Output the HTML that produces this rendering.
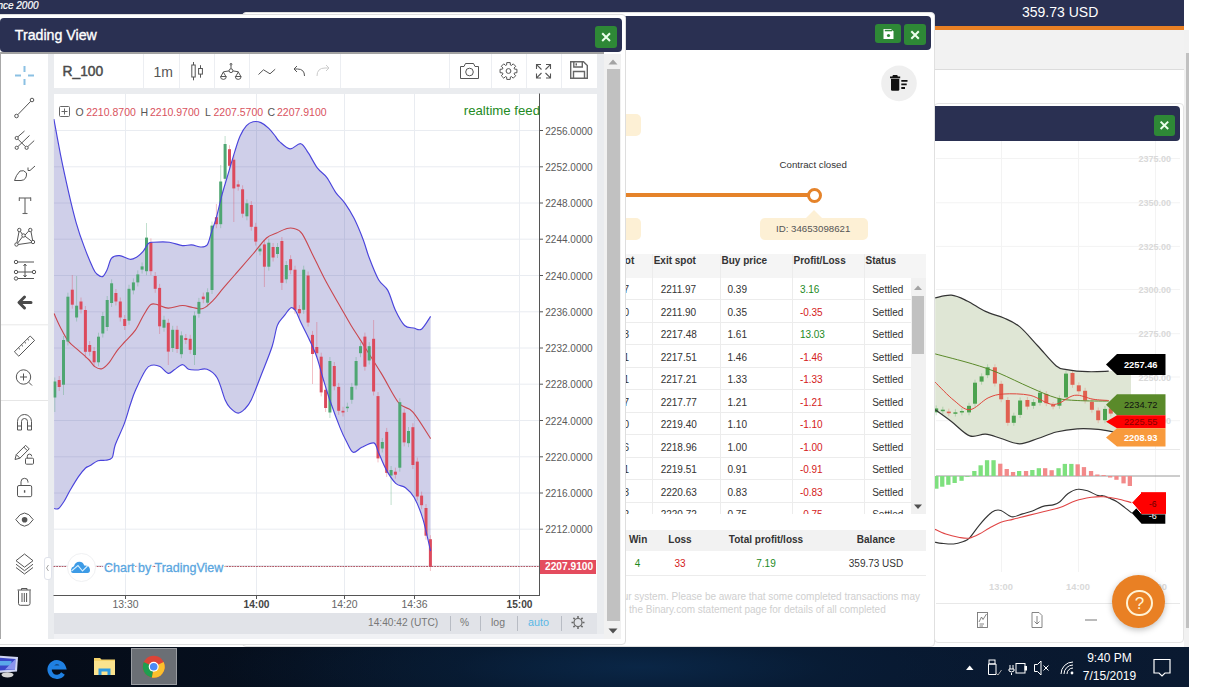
<!DOCTYPE html>
<html><head><meta charset="utf-8">
<style>
*{margin:0;padding:0;box-sizing:border-box}
html,body{width:1219px;height:687px;overflow:hidden;background:#fff;font-family:"Liberation Sans",sans-serif}
.a{position:absolute}
.navy{background:#2a3052}
.btn{position:absolute;background:#2e8836;border-radius:3px}
.t{position:absolute;white-space:nowrap;line-height:1}
svg{position:absolute;left:0;top:0;overflow:visible}
</style></head><body>

<div class="a navy" style="left:0;top:0;width:1184px;height:26px"></div>
<div class="a" style="left:0;top:26px;width:1184px;height:4px;background:#e98024"></div>
<div class="a" style="left:0;top:30px;width:1189px;height:39.5px;background:#f2f2f2;border-bottom:1px solid #dcdcdc"></div>
<div class="t" style="left:1022px;top:5px;font-size:14px;color:#fff">359.73 USD</div>
<div class="t" style="left:-2.6px;top:0.8px;font-size:10px;color:#fff;font-style:italic;-webkit-text-stroke:0.2px #fff">nce 2000</div>
<div class="a" style="left:1184px;top:30px;width:5px;height:617px;background:#f1f1f1"></div>
<div class="a" style="left:1185.5px;top:53px;width:3.5px;height:575px;background:#c1c1c1"></div>
<div class="a" style="left:934px;top:103px;width:250px;height:540px;background:#fff;border:1px solid #e4e4e4;border-radius:4px"></div>
<div class="a navy" style="left:900px;top:106px;width:280px;height:34.5px;border-radius:4px"></div>
<div class="btn" style="left:1154px;top:115px;width:21px;height:21px"></div>
<svg width="1219" height="687"><defs><clipPath id="c3"><rect x="935" y="141" width="245" height="500"/></clipPath></defs><g clip-path="url(#c3)"><g stroke="#f3f3f3" stroke-width="1"><line x1="936" y1="158.5" x2="1180" y2="158.5"/><line x1="936" y1="202.8" x2="1180" y2="202.8"/><line x1="936" y1="246.4" x2="1180" y2="246.4"/><line x1="936" y1="289.5" x2="1180" y2="289.5"/><line x1="936" y1="333.7" x2="1180" y2="333.7"/><line x1="936" y1="377.0" x2="1180" y2="377.0"/><line x1="936" y1="420.7" x2="1180" y2="420.7"/><line x1="1001.5" y1="141" x2="1001.5" y2="572"/><line x1="1078.5" y1="141" x2="1078.5" y2="572"/><line x1="1155.5" y1="141" x2="1155.5" y2="572"/></g>
<text x="1171" y="162.0" text-anchor="end" font-size="9" fill="#d9d9d9" font-weight="bold" font-family="Liberation Sans">2375.00</text>
<text x="1171" y="206.3" text-anchor="end" font-size="9" fill="#d9d9d9" font-weight="bold" font-family="Liberation Sans">2350.00</text>
<text x="1171" y="249.9" text-anchor="end" font-size="9" fill="#d9d9d9" font-weight="bold" font-family="Liberation Sans">2325.00</text>
<text x="1171" y="293.0" text-anchor="end" font-size="9" fill="#d9d9d9" font-weight="bold" font-family="Liberation Sans">2300.00</text>
<text x="1171" y="337.2" text-anchor="end" font-size="9" fill="#d9d9d9" font-weight="bold" font-family="Liberation Sans">2275.00</text>
<text x="1171" y="380.5" text-anchor="end" font-size="9" fill="#d9d9d9" font-weight="bold" font-family="Liberation Sans">2250.00</text>
<text x="1171" y="424.2" text-anchor="end" font-size="9" fill="#d9d9d9" font-weight="bold" font-family="Liberation Sans">2225.00</text>
<path d="M935.2 297.8 C937.9 297.4 946.1 294.7 951.4 295.2 C956.8 295.7 961.5 298.3 967.2 301.0 C972.8 303.7 979.4 308.6 985.5 311.4 C991.6 314.3 998.2 315.5 1003.9 318.0 C1009.5 320.5 1013.9 322.0 1019.6 326.6 C1025.3 331.3 1031.8 339.5 1037.9 346.0 C1044.0 352.6 1051.5 362.0 1056.3 366.0 C1061.1 369.9 1061.5 368.7 1066.8 369.6 C1072.0 370.6 1080.7 371.5 1087.7 371.7 C1094.7 372.0 1105.2 371.3 1108.7 371.2 L1113.9 432.0 C1111.3 431.6 1104.3 429.9 1098.2 429.4 C1092.1 428.8 1084.2 428.4 1077.2 428.8 C1070.2 429.3 1062.8 430.4 1056.3 432.0 C1049.7 433.6 1044.0 436.6 1037.9 438.5 C1031.8 440.5 1025.7 443.8 1019.6 443.8 C1013.5 443.8 1006.9 440.2 1001.2 438.5 C995.6 436.9 990.8 434.5 985.5 434.1 C980.3 433.7 975.5 438.0 969.8 435.9 C964.1 433.8 957.2 425.9 951.4 421.5 C945.7 417.1 937.9 411.7 935.2 409.7 Z" fill="#dfe6d5"/>
<rect x="1108" y="371" width="23" height="60" fill="#dfe6d5"/>
<line x1="936.2" y1="405.4" x2="936.2" y2="415.3" stroke="#4ca24f" stroke-opacity="0.3"/>
<rect x="934.2" y="408.4" width="4" height="3.9" fill="#4ca24f"/>
<line x1="942.8" y1="406.7" x2="942.8" y2="414.0" stroke="#4ca24f" stroke-opacity="0.3"/>
<rect x="940.8" y="409.7" width="4" height="1.5" fill="#4ca24f"/>
<line x1="948.8" y1="408.6" x2="948.8" y2="416.1" stroke="#e06050" stroke-opacity="0.3"/>
<rect x="946.8" y="411.6" width="4" height="1.6" fill="#e06050"/>
<line x1="955.4" y1="409.3" x2="955.4" y2="416.6" stroke="#4ca24f" stroke-opacity="0.3"/>
<rect x="953.4" y="412.3" width="4" height="1.5" fill="#4ca24f"/>
<line x1="961.9" y1="408.0" x2="961.9" y2="415.3" stroke="#4ca24f" stroke-opacity="0.3"/>
<rect x="959.9" y="411.0" width="4" height="1.5" fill="#4ca24f"/>
<line x1="969.0" y1="402.8" x2="969.0" y2="415.3" stroke="#4ca24f" stroke-opacity="0.3"/>
<rect x="967.0" y="405.8" width="4" height="6.6" fill="#4ca24f"/>
<line x1="975.0" y1="379.7" x2="975.0" y2="406.7" stroke="#4ca24f" stroke-opacity="0.3"/>
<rect x="973.0" y="382.7" width="4" height="21.0" fill="#4ca24f"/>
<line x1="981.6" y1="373.4" x2="981.6" y2="384.7" stroke="#4ca24f" stroke-opacity="0.3"/>
<rect x="979.6" y="376.4" width="4" height="5.2" fill="#4ca24f"/>
<line x1="987.6" y1="364.3" x2="987.6" y2="378.1" stroke="#4ca24f" stroke-opacity="0.3"/>
<rect x="985.6" y="367.3" width="4" height="7.9" fill="#4ca24f"/>
<line x1="994.9" y1="364.3" x2="994.9" y2="386.5" stroke="#e06050" stroke-opacity="0.3"/>
<rect x="992.9" y="367.3" width="4" height="16.2" fill="#e06050"/>
<line x1="1001.2" y1="380.8" x2="1001.2" y2="402.2" stroke="#e06050" stroke-opacity="0.3"/>
<rect x="999.2" y="383.8" width="4" height="15.5" fill="#e06050"/>
<line x1="1007.8" y1="397.0" x2="1007.8" y2="425.8" stroke="#e06050" stroke-opacity="0.3"/>
<rect x="1005.8" y="400.0" width="4" height="22.8" fill="#e06050"/>
<line x1="1013.8" y1="412.7" x2="1013.8" y2="425.8" stroke="#4ca24f" stroke-opacity="0.3"/>
<rect x="1011.8" y="415.7" width="4" height="7.1" fill="#4ca24f"/>
<line x1="1020.1" y1="397.5" x2="1020.1" y2="418.0" stroke="#4ca24f" stroke-opacity="0.3"/>
<rect x="1018.1" y="400.5" width="4" height="14.4" fill="#4ca24f"/>
<line x1="1027.4" y1="397.0" x2="1027.4" y2="409.6" stroke="#e06050" stroke-opacity="0.3"/>
<rect x="1025.4" y="400.0" width="4" height="6.6" fill="#e06050"/>
<line x1="1033.5" y1="399.1" x2="1033.5" y2="408.8" stroke="#4ca24f" stroke-opacity="0.3"/>
<rect x="1031.5" y="402.1" width="4" height="3.7" fill="#4ca24f"/>
<line x1="1040.0" y1="389.7" x2="1040.0" y2="405.6" stroke="#4ca24f" stroke-opacity="0.3"/>
<rect x="1038.0" y="392.7" width="4" height="10.0" fill="#4ca24f"/>
<line x1="1046.3" y1="391.0" x2="1046.3" y2="406.2" stroke="#e06050" stroke-opacity="0.3"/>
<rect x="1044.3" y="394.0" width="4" height="9.2" fill="#e06050"/>
<line x1="1053.1" y1="402.0" x2="1053.1" y2="409.3" stroke="#e06050" stroke-opacity="0.3"/>
<rect x="1051.1" y="405.0" width="4" height="1.5" fill="#e06050"/>
<line x1="1059.4" y1="395.4" x2="1059.4" y2="408.8" stroke="#4ca24f" stroke-opacity="0.3"/>
<rect x="1057.4" y="398.4" width="4" height="7.3" fill="#4ca24f"/>
<line x1="1066.0" y1="370.6" x2="1066.0" y2="400.4" stroke="#4ca24f" stroke-opacity="0.3"/>
<rect x="1064.0" y="373.6" width="4" height="23.8" fill="#4ca24f"/>
<line x1="1072.5" y1="370.0" x2="1072.5" y2="387.8" stroke="#e06050" stroke-opacity="0.3"/>
<rect x="1070.5" y="373.0" width="4" height="11.8" fill="#e06050"/>
<line x1="1078.8" y1="382.3" x2="1078.8" y2="394.4" stroke="#e06050" stroke-opacity="0.3"/>
<rect x="1076.8" y="385.3" width="4" height="6.0" fill="#e06050"/>
<line x1="1085.1" y1="387.8" x2="1085.1" y2="403.5" stroke="#e06050" stroke-opacity="0.3"/>
<rect x="1083.1" y="390.8" width="4" height="9.7" fill="#e06050"/>
<line x1="1091.9" y1="398.9" x2="1091.9" y2="412.7" stroke="#e06050" stroke-opacity="0.3"/>
<rect x="1089.9" y="401.9" width="4" height="7.9" fill="#e06050"/>
<line x1="1098.2" y1="407.5" x2="1098.2" y2="423.2" stroke="#e06050" stroke-opacity="0.3"/>
<rect x="1096.2" y="410.5" width="4" height="9.7" fill="#e06050"/>
<line x1="1105.0" y1="405.9" x2="1105.0" y2="423.2" stroke="#4ca24f" stroke-opacity="0.3"/>
<rect x="1103.0" y="408.9" width="4" height="11.3" fill="#4ca24f"/>
<line x1="1110.8" y1="405.4" x2="1110.8" y2="416.6" stroke="#e06050" stroke-opacity="0.3"/>
<rect x="1108.8" y="408.4" width="4" height="5.2" fill="#e06050"/>
<path d="M935.2 353.9 C941.4 355.6 961.8 360.7 972.4 363.9 C983.0 367.0 989.0 369.1 998.6 373.0 C1008.2 377.0 1020.5 383.3 1030.1 387.4 C1039.7 391.6 1048.4 395.7 1056.3 397.9 C1064.1 400.1 1068.5 400.0 1077.2 400.5 C1086.0 401.1 1103.4 401.0 1108.7 401.1" fill="none" stroke="#5b8a2a" stroke-width="1"/>
<path d="M935.2 382.2 C938.3 385.3 948.3 396.0 954.1 400.5 C959.8 405.1 964.1 410.2 969.8 409.7 C975.5 409.3 982.5 400.5 988.1 397.9 C993.8 395.3 996.9 394.4 1003.9 394.0 C1010.8 393.6 1021.8 393.6 1030.1 395.3 C1038.4 397.1 1046.2 404.5 1053.6 404.5 C1061.1 404.5 1068.1 396.2 1074.6 395.3 C1081.2 394.4 1087.3 398.4 1093.0 399.2 C1098.6 400.1 1106.1 400.3 1108.7 400.5" fill="none" stroke="#e0453a" stroke-width="1"/>
<path d="M935.2 297.8 C937.9 297.4 946.1 294.7 951.4 295.2 C956.8 295.7 961.5 298.3 967.2 301.0 C972.8 303.7 979.4 308.6 985.5 311.4 C991.6 314.3 998.2 315.5 1003.9 318.0 C1009.5 320.5 1013.9 322.0 1019.6 326.6 C1025.3 331.3 1031.8 339.5 1037.9 346.0 C1044.0 352.6 1051.5 362.0 1056.3 366.0 C1061.1 369.9 1061.5 368.7 1066.8 369.6 C1072.0 370.6 1080.7 371.5 1087.7 371.7 C1094.7 372.0 1105.2 371.3 1108.7 371.2" fill="none" stroke="#333" stroke-width="1.2"/>
<path d="M935.2 409.7 C937.9 411.7 945.7 417.1 951.4 421.5 C957.2 425.9 964.1 433.8 969.8 435.9 C975.5 438.0 980.3 433.7 985.5 434.1 C990.8 434.5 995.6 436.9 1001.2 438.5 C1006.9 440.2 1013.5 443.8 1019.6 443.8 C1025.7 443.8 1031.8 440.5 1037.9 438.5 C1044.0 436.6 1049.7 433.6 1056.3 432.0 C1062.8 430.4 1070.2 429.3 1077.2 428.8 C1084.2 428.4 1092.1 428.8 1098.2 429.4 C1104.3 429.9 1111.3 431.6 1113.9 432.0" fill="none" stroke="#333" stroke-width="1.2"/>
<path d="M1106 364.5 L1117 354.0 L1165.5 354.0 L1165.5 375.0 L1117 375.0 Z" fill="#000"/>
<text x="1157.5" y="367.8" text-anchor="end" font-size="9.3" fill="#fff" font-family="Liberation Sans" font-weight="bold">2257.46</text>
<path d="M1106 404.7 L1117 394.2 L1165.5 394.2 L1165.5 415.2 L1117 415.2 Z" fill="#5a8a2a"/>
<text x="1157.5" y="408.0" text-anchor="end" font-size="9.3" fill="#111" font-family="Liberation Sans">2234.72</text>
<path d="M1106 421.8 L1117 415.2 L1165.5 415.2 L1165.5 428.3 L1117 428.3 Z" fill="#ff0000"/>
<text x="1157.5" y="425.1" text-anchor="end" font-size="9.3" fill="#800" font-family="Liberation Sans">2225.55</text>
<path d="M1106 437.5 L1117 428.3 L1165.5 428.3 L1165.5 446.6 L1117 446.6 Z" fill="#f89a3c"/>
<text x="1157.5" y="440.8" text-anchor="end" font-size="9.3" fill="#fff" font-family="Liberation Sans" font-weight="bold">2208.93</text>
<line x1="936" y1="449.5" x2="1180" y2="449.5" stroke="#e8e8e8"/>
<line x1="936" y1="476" x2="1180" y2="476" stroke="#9a9a9a"/>
<rect x="934.2" y="476.0" width="4.3" height="12.7" fill="#7ee07e"/>
<rect x="940.1" y="476.0" width="4.3" height="10.7" fill="#7ee07e"/>
<rect x="946.2" y="476.0" width="4.3" height="8.8" fill="#7ee07e"/>
<rect x="952.5" y="476.0" width="4.3" height="7.0" fill="#7ee07e"/>
<rect x="959.4" y="476.0" width="4.3" height="4.8" fill="#7ee07e"/>
<rect x="965.3" y="476.0" width="4.3" height="0.8" fill="#7ee07e"/>
<rect x="972.2" y="471.0" width="4.3" height="5.0" fill="#7ee07e"/>
<rect x="978.5" y="465.3" width="4.3" height="10.7" fill="#7ee07e"/>
<rect x="984.9" y="460.2" width="4.3" height="15.8" fill="#7ee07e"/>
<rect x="991.4" y="460.2" width="4.3" height="15.8" fill="#7ee07e"/>
<rect x="998.1" y="463.7" width="4.3" height="12.3" fill="#f28a8a"/>
<rect x="1004.6" y="469.0" width="4.3" height="7.0" fill="#f28a8a"/>
<rect x="1010.9" y="472.0" width="4.3" height="4.0" fill="#f28a8a"/>
<rect x="1017.0" y="471.0" width="4.3" height="5.0" fill="#7ee07e"/>
<rect x="1023.9" y="471.0" width="4.3" height="5.0" fill="#f28a8a"/>
<rect x="1030.2" y="470.0" width="4.3" height="6.0" fill="#7ee07e"/>
<rect x="1036.7" y="468.2" width="4.3" height="7.8" fill="#7ee07e"/>
<rect x="1043.0" y="468.2" width="4.3" height="7.8" fill="#f28a8a"/>
<rect x="1049.5" y="470.2" width="4.3" height="5.8" fill="#f28a8a"/>
<rect x="1056.4" y="468.2" width="4.3" height="7.8" fill="#7ee07e"/>
<rect x="1062.7" y="463.9" width="4.3" height="12.1" fill="#7ee07e"/>
<rect x="1069.2" y="463.9" width="4.3" height="12.1" fill="#7ee07e"/>
<rect x="1075.5" y="464.3" width="4.3" height="11.7" fill="#f28a8a"/>
<rect x="1081.8" y="467.1" width="4.3" height="8.9" fill="#f28a8a"/>
<rect x="1088.9" y="471.0" width="4.3" height="5.0" fill="#f28a8a"/>
<rect x="1095.2" y="474.5" width="4.3" height="1.5" fill="#f28a8a"/>
<rect x="1101.5" y="475.1" width="4.3" height="0.9" fill="#f28a8a"/>
<rect x="1108.0" y="476.0" width="4.3" height="1.5" fill="#f28a8a"/>
<rect x="1114.3" y="476.0" width="4.3" height="3.8" fill="#f28a8a"/>
<rect x="1121.4" y="476.0" width="4.3" height="7.4" fill="#f28a8a"/>
<rect x="1127.7" y="476.0" width="4.3" height="10.0" fill="#f28a8a"/>
<path d="M933.9 542.0 C935.3 542.2 938.5 543.1 941.8 543.4 C945.1 543.7 950.0 544.3 953.6 544.0 C957.2 543.7 960.8 542.4 963.5 541.4 C966.1 540.4 966.8 540.8 969.4 538.1 C972.0 535.4 975.9 529.2 979.2 525.3 C982.5 521.3 986.4 516.9 989.1 514.5 C991.7 512.0 993.0 511.2 995.0 510.5 C996.9 509.9 998.6 509.7 1000.9 510.5 C1003.2 511.3 1006.6 514.4 1008.8 515.4 C1010.9 516.5 1011.4 517.1 1013.7 516.8 C1016.0 516.6 1019.4 514.8 1022.5 513.9 C1025.7 512.9 1029.1 512.3 1032.4 511.1 C1035.7 509.9 1038.6 507.7 1042.2 506.6 C1045.8 505.5 1051.1 505.4 1054.0 504.6 C1057.0 503.8 1057.6 503.5 1059.9 501.7 C1062.2 499.9 1064.9 495.8 1067.8 493.8 C1070.8 491.7 1074.4 489.7 1077.7 489.3 C1080.9 488.8 1084.2 489.8 1087.5 490.8 C1090.8 491.8 1094.7 494.5 1097.4 495.4 C1100.0 496.2 1101.3 495.3 1103.3 495.8 C1105.2 496.2 1106.9 497.1 1109.2 498.1 C1111.5 499.1 1114.4 500.1 1117.0 501.7 C1119.7 503.2 1122.5 505.7 1124.9 507.6 C1127.4 509.5 1130.7 512.2 1131.8 513.1" fill="none" stroke="#333" stroke-width="1.1"/>
<path d="M933.9 528.8 C935.9 529.7 941.5 532.7 945.8 534.1 C950.0 535.6 955.6 536.8 959.5 537.5 C963.5 538.1 966.1 538.6 969.4 538.1 C972.7 537.5 975.9 535.8 979.2 534.1 C982.5 532.5 985.5 530.2 989.1 528.2 C992.7 526.3 996.9 523.8 1000.9 522.3 C1004.8 520.9 1008.1 520.5 1012.7 519.4 C1017.3 518.2 1023.2 516.8 1028.4 515.4 C1033.7 514.1 1038.9 512.8 1044.2 511.5 C1049.4 510.2 1054.7 509.4 1059.9 507.6 C1065.2 505.8 1070.4 502.4 1075.7 500.7 C1080.9 499.0 1086.9 498.0 1091.4 497.3 C1096.0 496.7 1099.0 496.5 1103.3 496.7 C1107.5 497.0 1112.3 497.7 1117.0 498.7 C1121.8 499.7 1129.4 502.0 1131.8 502.6" fill="none" stroke="#e04545" stroke-width="1.1"/>
<path d="M1131.8 513 L1141.6 503 L1165.3 503 L1165.3 523.7 L1141.6 523.7 Z" fill="#000"/>
<text x="1152.8" y="518.8" text-anchor="middle" font-size="9" fill="#fff" font-family="Liberation Sans">-6</text>
<path d="M1131.8 502.6 L1141.6 492.2 L1165.3 492.2 L1165.3 513.9 L1141.6 513.9 Z" fill="#ff0000" stroke="#fff" stroke-width="1"/>
<rect x="1141" y="492.2" width="25" height="21.7" fill="#ff0000"/>
<text x="1152.8" y="506.5" text-anchor="middle" font-size="8.5" fill="#600" font-family="Liberation Sans">-6</text>
<text x="1001" y="589.5" text-anchor="middle" font-size="9.3" fill="#d9d9d9" font-family="Liberation Sans" font-weight="bold">13:00</text>
<text x="1078" y="589.5" text-anchor="middle" font-size="9.3" fill="#d9d9d9" font-family="Liberation Sans" font-weight="bold">14:00</text>
<text x="1155" y="589.5" text-anchor="middle" font-size="9.3" fill="#d9d9d9" font-family="Liberation Sans" font-weight="bold">15:00</text>
<line x1="936" y1="603.5" x2="1180" y2="603.5" stroke="#e8e8e8"/>
<g fill="none" stroke="#777" stroke-width="0.9"><rect x="977.5" y="612.5" width="10" height="15"/><path d="M979 622 L981.5 617 L983 619.5 L986.5 614"/><path d="M979.5 624 L984 624 M979.5 626 L983 626"/>
<path d="M1032 612.5 L1039 612.5 L1042 615.5 L1042 627.5 L1032 627.5 Z M1037 616 L1037 624 M1034.5 621.5 L1037 624 L1039.5 621.5"/></g>
<line x1="1085" y1="620" x2="1097" y2="620" stroke="#bbb" stroke-width="2"/></g><path d="M1160.6 121.6 L1168.2 129 M1168.2 121.6 L1160.6 129" stroke="#eaffea" stroke-width="2"/></svg>
<div class="a" style="left:1112px;top:574.9px;width:53.4px;height:53.4px;border-radius:50%;background:#e98024;box-shadow:0 2px 6px rgba(0,0,0,0.25)"></div>
<div class="a" style="left:1126.4px;top:589.6px;width:26.2px;height:26.2px;border-radius:50%;border:2px solid #fff3d6"></div>
<div class="t" style="top:594.61px;font-size:17.00px;color:#fff3d6;left:1139.50px;transform:translateX(-50%)">?</div>
<div class="a" style="left:242px;top:12px;width:693px;height:635px;background:#fff;border:1px solid #e0e0e0;border-radius:4px"></div>
<div class="a navy" style="left:246px;top:16px;width:685px;height:34px;border-radius:4px"></div>
<div class="btn" style="left:875px;top:24px;width:26px;height:19px"></div>
<div class="btn" style="left:904px;top:24px;width:22px;height:21px"></div>
<svg width="1219" height="687"><path d="M883.5 29 L891 29 L893.5 31.5 L893.5 39 L883.5 39 Z" fill="#fff"/><rect x="884.8" y="29.8" width="7.3" height="1.5" fill="#2e8836"/><circle cx="888.5" cy="35.5" r="1.6" fill="#2e8836"/><path d="M911.3 31.3 L918.8 38.8 M918.8 31.3 L911.3 38.8" stroke="#eaffea" stroke-width="2"/><circle cx="899" cy="83.4" r="17.8" fill="#efefef"/><path d="M890 77.4 L900.2 77.4 M893 77 L893.5 75.8 L896.7 75.8 L897.2 77" fill="none" stroke="#111" stroke-width="1.6"/><path d="M891 78.8 L899.3 78.8 L899.3 89.5 Q899.3 90.7 898 90.7 L892.3 90.7 Q891 90.7 891 89.5 Z" fill="#111"/><path d="M901.3 80.8 L907.5 80.8 M901.3 84.4 L906.7 84.4 M901.3 88 L905 88" stroke="#111" stroke-width="1.8"/></svg>
<div class="a" style="left:600px;top:114px;width:41px;height:22px;background:#fdf0d5;border-radius:5px"></div>
<div class="a" style="left:600px;top:217.5px;width:41px;height:22px;background:#fdf0d5;border-radius:5px"></div>
<div class="a" style="left:600px;top:193px;width:210px;height:4px;background:#e5832a"></div>
<div class="a" style="left:806.5px;top:187.5px;width:15px;height:15px;border-radius:50%;background:#fff;border:3.5px solid #e5832a"></div>
<div class="t" style="left:779.5px;top:160px;font-size:9.7px;color:#333">Contract closed</div>
<div class="a" style="left:760px;top:217.5px;width:108px;height:22px;background:#fdf0d5;border-radius:5px"></div>
<svg width="1219" height="687"><path d="M806 218 L814 210 L822 218 Z" fill="#fdf0d5"/></svg>
<div class="t" style="left:776px;top:224px;font-size:9.7px;color:#555">ID: 34653098621</div>
<div class="a" style="left:590px;top:254px;width:335.5px;height:23.5px;background:#f5f5f5"></div>
<div class="a" style="left:652px;top:254px;width:1px;height:260px;background:#ececec"></div>
<div class="a" style="left:720px;top:254px;width:1px;height:260px;background:#ececec"></div>
<div class="a" style="left:792px;top:254px;width:1px;height:260px;background:#ececec"></div>
<div class="a" style="left:864px;top:254px;width:1px;height:260px;background:#ececec"></div>
<div class="a" style="left:590px;top:299.3px;width:321px;height:1px;background:#ececec"></div>
<div class="a" style="left:590px;top:321.8px;width:321px;height:1px;background:#ececec"></div>
<div class="a" style="left:590px;top:344.3px;width:321px;height:1px;background:#ececec"></div>
<div class="a" style="left:590px;top:366.8px;width:321px;height:1px;background:#ececec"></div>
<div class="a" style="left:590px;top:389.3px;width:321px;height:1px;background:#ececec"></div>
<div class="a" style="left:590px;top:411.8px;width:321px;height:1px;background:#ececec"></div>
<div class="a" style="left:590px;top:434.3px;width:321px;height:1px;background:#ececec"></div>
<div class="a" style="left:590px;top:456.8px;width:321px;height:1px;background:#ececec"></div>
<div class="a" style="left:590px;top:479.3px;width:321px;height:1px;background:#ececec"></div>
<div class="a" style="left:590px;top:501.8px;width:321px;height:1px;background:#ececec"></div>
<div class="t" style="top:256.04px;font-size:10.00px;color:#333;font-weight:bold;right:584.70px">Entry spot</div>
<div class="t" style="top:256.04px;font-size:10.00px;color:#333;font-weight:bold;left:653.70px">Exit spot</div>
<div class="t" style="top:256.04px;font-size:10.00px;color:#333;font-weight:bold;left:721.50px">Buy price</div>
<div class="t" style="top:256.04px;font-size:10.00px;color:#333;font-weight:bold;left:793.50px">Profit/Loss</div>
<div class="t" style="top:256.04px;font-size:10.00px;color:#333;font-weight:bold;left:865.50px">Status</div>
<div class="a" style="left:590px;top:278px;width:321px;height:236px;overflow:hidden">
<div class="t" style="top:7.34px;font-size:10.00px;color:#333;right:282.00px">2220.37</div>
<div class="t" style="top:7.34px;font-size:10.00px;color:#333;left:70.70px">2211.97</div>
<div class="t" style="top:7.34px;font-size:10.00px;color:#333;left:137.50px">0.39</div>
<div class="t" style="top:7.34px;font-size:10.00px;color:#1d8a1d;left:209.90px">3.16</div>
<div class="t" style="top:7.34px;font-size:10.00px;color:#333;left:282.20px">Settled</div>
<div class="t" style="top:29.84px;font-size:10.00px;color:#333;right:282.00px">2220.30</div>
<div class="t" style="top:29.84px;font-size:10.00px;color:#333;left:70.70px">2211.90</div>
<div class="t" style="top:29.84px;font-size:10.00px;color:#333;left:137.50px">0.35</div>
<div class="t" style="top:29.84px;font-size:10.00px;color:#d42020;left:209.90px">-0.35</div>
<div class="t" style="top:29.84px;font-size:10.00px;color:#333;left:282.20px">Settled</div>
<div class="t" style="top:52.34px;font-size:10.00px;color:#333;right:282.00px">2220.33</div>
<div class="t" style="top:52.34px;font-size:10.00px;color:#333;left:70.70px">2217.48</div>
<div class="t" style="top:52.34px;font-size:10.00px;color:#333;left:137.50px">1.61</div>
<div class="t" style="top:52.34px;font-size:10.00px;color:#1d8a1d;left:209.90px">13.03</div>
<div class="t" style="top:52.34px;font-size:10.00px;color:#333;left:282.20px">Settled</div>
<div class="t" style="top:74.84px;font-size:10.00px;color:#333;right:282.00px">2220.31</div>
<div class="t" style="top:74.84px;font-size:10.00px;color:#333;left:70.70px">2217.51</div>
<div class="t" style="top:74.84px;font-size:10.00px;color:#333;left:137.50px">1.46</div>
<div class="t" style="top:74.84px;font-size:10.00px;color:#d42020;left:209.90px">-1.46</div>
<div class="t" style="top:74.84px;font-size:10.00px;color:#333;left:282.20px">Settled</div>
<div class="t" style="top:97.34px;font-size:10.00px;color:#333;right:282.00px">2220.31</div>
<div class="t" style="top:97.34px;font-size:10.00px;color:#333;left:70.70px">2217.21</div>
<div class="t" style="top:97.34px;font-size:10.00px;color:#333;left:137.50px">1.33</div>
<div class="t" style="top:97.34px;font-size:10.00px;color:#d42020;left:209.90px">-1.33</div>
<div class="t" style="top:97.34px;font-size:10.00px;color:#333;left:282.20px">Settled</div>
<div class="t" style="top:119.84px;font-size:10.00px;color:#333;right:282.00px">2220.37</div>
<div class="t" style="top:119.84px;font-size:10.00px;color:#333;left:70.70px">2217.77</div>
<div class="t" style="top:119.84px;font-size:10.00px;color:#333;left:137.50px">1.21</div>
<div class="t" style="top:119.84px;font-size:10.00px;color:#d42020;left:209.90px">-1.21</div>
<div class="t" style="top:119.84px;font-size:10.00px;color:#333;left:282.20px">Settled</div>
<div class="t" style="top:142.34px;font-size:10.00px;color:#333;right:282.00px">2220.30</div>
<div class="t" style="top:142.34px;font-size:10.00px;color:#333;left:70.70px">2219.40</div>
<div class="t" style="top:142.34px;font-size:10.00px;color:#333;left:137.50px">1.10</div>
<div class="t" style="top:142.34px;font-size:10.00px;color:#d42020;left:209.90px">-1.10</div>
<div class="t" style="top:142.34px;font-size:10.00px;color:#333;left:282.20px">Settled</div>
<div class="t" style="top:164.84px;font-size:10.00px;color:#333;right:282.00px">2220.36</div>
<div class="t" style="top:164.84px;font-size:10.00px;color:#333;left:70.70px">2218.96</div>
<div class="t" style="top:164.84px;font-size:10.00px;color:#333;left:137.50px">1.00</div>
<div class="t" style="top:164.84px;font-size:10.00px;color:#d42020;left:209.90px">-1.00</div>
<div class="t" style="top:164.84px;font-size:10.00px;color:#333;left:282.20px">Settled</div>
<div class="t" style="top:187.34px;font-size:10.00px;color:#333;right:282.00px">2220.31</div>
<div class="t" style="top:187.34px;font-size:10.00px;color:#333;left:70.70px">2219.51</div>
<div class="t" style="top:187.34px;font-size:10.00px;color:#333;left:137.50px">0.91</div>
<div class="t" style="top:187.34px;font-size:10.00px;color:#d42020;left:209.90px">-0.91</div>
<div class="t" style="top:187.34px;font-size:10.00px;color:#333;left:282.20px">Settled</div>
<div class="t" style="top:209.84px;font-size:10.00px;color:#333;right:282.00px">2220.33</div>
<div class="t" style="top:209.84px;font-size:10.00px;color:#333;left:70.70px">2220.63</div>
<div class="t" style="top:209.84px;font-size:10.00px;color:#333;left:137.50px">0.83</div>
<div class="t" style="top:209.84px;font-size:10.00px;color:#d42020;left:209.90px">-0.83</div>
<div class="t" style="top:209.84px;font-size:10.00px;color:#333;left:282.20px">Settled</div>
<div class="t" style="top:232.33px;font-size:10.00px;color:#333;right:282.00px">2220.32</div>
<div class="t" style="top:232.33px;font-size:10.00px;color:#333;left:70.70px">2220.72</div>
<div class="t" style="top:232.33px;font-size:10.00px;color:#333;left:137.50px">0.75</div>
<div class="t" style="top:232.33px;font-size:10.00px;color:#d42020;left:209.90px">-0.75</div>
<div class="t" style="top:232.33px;font-size:10.00px;color:#333;left:282.20px">Settled</div>
</div>
<div class="a" style="left:910.5px;top:278px;width:15px;height:236px;background:#f1f1f1"></div>
<div class="a" style="left:912px;top:295.5px;width:12px;height:58px;background:#c1c1c1"></div>
<svg width="1219" height="687"><path d="M914 290 L918 285.5 L922 290 Z" fill="#a3a3a3"/><path d="M914 504.5 L918 509 L922 504.5 Z" fill="#505050"/></svg>
<div class="a" style="left:590px;top:530px;width:335.5px;height:20.7px;background:#f2f2f2"></div>
<div class="a" style="left:590px;top:574.5px;width:335.5px;height:1.5px;background:#ececec"></div>
<div class="t" style="top:534.83px;font-size:10.00px;color:#333;font-weight:bold;left:629.00px">Win</div>
<div class="t" style="top:534.83px;font-size:10.00px;color:#333;font-weight:bold;left:680.00px;transform:translateX(-50%)">Loss</div>
<div class="t" style="top:534.83px;font-size:10.00px;color:#333;font-weight:bold;left:766.00px;transform:translateX(-50%)">Total profit/loss</div>
<div class="t" style="top:534.83px;font-size:10.00px;color:#333;font-weight:bold;left:876.00px;transform:translateX(-50%)">Balance</div>
<div class="t" style="top:558.53px;font-size:10.00px;color:#1d8a1d;left:637.50px;transform:translateX(-50%)">4</div>
<div class="t" style="top:558.53px;font-size:10.00px;color:#d42020;left:680.00px;transform:translateX(-50%)">33</div>
<div class="t" style="top:558.53px;font-size:10.00px;color:#1d8a1d;left:766.00px;transform:translateX(-50%)">7.19</div>
<div class="t" style="top:558.53px;font-size:10.00px;color:#333;left:876.00px;transform:translateX(-50%)">359.73 USD</div>
<div class="t" style="top:592.03px;font-size:10.00px;color:#cfcfcf;right:299.00px">Stopping the bot will prevent further contracts. Any ongoing contracts will be completed by our system. Please be aware that some completed transactions may</div>
<div class="t" style="top:605.03px;font-size:10.00px;color:#cfcfcf;right:333.30px">You may refer to the Binary.com statement page for details of all completed</div>
<div class="a" style="left:-4px;top:13.5px;width:629.5px;height:631px;background:#fff;border:1px solid #dedede;border-radius:4px"></div>
<div class="a navy" style="left:0;top:18px;width:622px;height:34px;border-radius:4px"></div>
<div class="a" style="left:0;top:51.5px;width:604px;height:2.5px;background:#a2a2a2"></div>
<div class="t" style="left:14.8px;top:27.8px;font-size:14.2px;color:#fff;-webkit-text-stroke:0.35px #fff">Trading View</div>
<div class="btn" style="left:595px;top:26px;width:22px;height:22px"></div>
<div class="a" style="left:0;top:52px;width:1.3px;height:587px;background:#a8a8a8"></div>
<div class="a" style="left:48px;top:54px;width:556px;height:585px;background:#eaecef"></div>
<div class="a" style="left:1.5px;top:54px;width:46.5px;height:585px;background:#fff"></div>
<div class="a" style="left:53.5px;top:54px;width:543.5px;height:33.7px;background:#fff"></div>
<div class="a" style="left:143.0px;top:54px;width:1px;height:33.7px;background:#eceef2"></div>
<div class="a" style="left:178.5px;top:54px;width:1px;height:33.7px;background:#eceef2"></div>
<div class="a" style="left:213.5px;top:54px;width:1px;height:33.7px;background:#eceef2"></div>
<div class="a" style="left:248.5px;top:54px;width:1px;height:33.7px;background:#eceef2"></div>
<div class="a" style="left:340.0px;top:54px;width:1px;height:33.7px;background:#eceef2"></div>
<div class="a" style="left:448.5px;top:54px;width:1px;height:33.7px;background:#eceef2"></div>
<div class="a" style="left:490.5px;top:54px;width:1px;height:33.7px;background:#eceef2"></div>
<div class="a" style="left:525.5px;top:54px;width:1px;height:33.7px;background:#eceef2"></div>
<div class="a" style="left:560.5px;top:54px;width:1px;height:33.7px;background:#eceef2"></div>
<div class="t" style="top:64.82px;font-size:13.80px;color:#4a4a4a;-webkit-text-stroke:0.45px #4a4a4a;left:62.50px">R_100</div>
<div class="t" style="top:64.65px;font-size:14.00px;color:#555;left:153.50px">1m</div>
<div class="a" style="left:53.5px;top:93.5px;width:543.5px;height:519.5px;background:#fff"></div>
<div class="a" style="left:53.5px;top:613px;width:543.5px;height:21px;background:#e1e3e8"></div>
<div class="a" style="left:53.5px;top:634px;width:550.5px;height:5px;background:#f0f1f4"></div>
<div class="a" style="left:604px;top:54px;width:17px;height:585px;background:#f1f1f1"></div>
<div class="a" style="left:607px;top:69px;width:13px;height:551.5px;background:#c1c1c1"></div>
<svg width="1219" height="687"><path d="M608.5 64.5 L613 59.5 L617.5 64.5 Z" fill="#a3a3a3"/><path d="M608.5 628.5 L613 633.5 L617.5 628.5 Z" fill="#505050"/><path d="M602.2 33.2 L610 41 M610 33.2 L602.2 41" stroke="#eaffea" stroke-width="2"/><g stroke="#8bc0e3" stroke-width="2"><line x1="24.5" y1="66" x2="24.5" y2="72"/><line x1="24.5" y1="79" x2="24.5" y2="85"/><line x1="15" y1="75.5" x2="21" y2="75.5"/><line x1="28" y1="75.5" x2="34" y2="75.5"/></g><g fill="none" stroke="#555" stroke-width="1"><circle cx="16.5" cy="116" r="1.8"/><circle cx="32" cy="100" r="1.8"/><line x1="17.8" y1="114.7" x2="30.7" y2="101.3"/></g><g fill="none" stroke="#555" stroke-width="1"><circle cx="16.7" cy="138" r="1.6"/><circle cx="16.7" cy="147.8" r="1.6"/><circle cx="26.6" cy="147.8" r="1.6"/><line x1="18" y1="136.7" x2="24.5" y2="131"/><line x1="18" y1="139.2" x2="25.4" y2="146.6"/><line x1="18" y1="146.5" x2="29.5" y2="135.5"/><line x1="27.9" y1="146.5" x2="34.2" y2="140.6"/></g><g fill="none" stroke="#555" stroke-width="1"><path d="M14.5 180.5 L21 180.5 Q27 180 26.5 173 Q24 169.5 20 171 Q16 175 14.5 180.5 Z"/><path d="M28 167.5 L28 170.5 L30 170.5 L35 166"/></g><g fill="none" stroke="#666" stroke-width="1.1"><line x1="19" y1="198" x2="31" y2="198"/><line x1="19.3" y1="197.5" x2="19.3" y2="201"/><line x1="30.7" y1="197.5" x2="30.7" y2="201"/><line x1="25" y1="198" x2="25" y2="213.5"/><line x1="22.5" y1="213.5" x2="27.5" y2="213.5"/></g><g fill="none" stroke="#555" stroke-width="1"><circle cx="19.3" cy="230" r="1.7"/><circle cx="30.3" cy="230" r="1.7"/><circle cx="23.5" cy="235.5" r="1.7"/><circle cx="16.5" cy="244.5" r="1.7"/><circle cx="33" cy="242" r="1.7"/><path d="M16.9 242.8 L19 231.7 M20.4 231.3 L22.3 234.3 M25.1 235 L28.7 231 M31 231.6 L32.6 240.3 M31.4 242.6 L18.2 244.5 M22.5 236.8 L17.6 243.2 M25 236.2 L31.5 241.2"/></g><g fill="none" stroke="#555" stroke-width="1"><circle cx="16" cy="262" r="1.7"/><circle cx="16" cy="272" r="1.7"/><circle cx="16" cy="278.5" r="1.7"/><circle cx="34" cy="272" r="1.7"/><line x1="17.7" y1="262" x2="34" y2="262"/><line x1="17.7" y1="272" x2="32.3" y2="272"/><line x1="17.7" y1="278.5" x2="34" y2="278.5"/><line x1="25" y1="264" x2="25" y2="277"/><path d="M23.5 266 L25 264 L26.5 266 M23.5 275 L25 277 L26.5 275"/></g><path d="M31 302.5 L20 302.5 M24.5 297 L19 302.5 L24.5 308" fill="none" stroke="#4a4a4a" stroke-width="3" stroke-linecap="round" stroke-linejoin="round"/><line x1="1" y1="324.8" x2="48" y2="324.8" stroke="#e8e8e8"/><g fill="none" stroke="#555" stroke-width="1"><path d="M14.4 351.8 L18.8 356.2 L34.6 340.4 L30.2 336 Z"/><path d="M18.4 347.8 l1.6 1.6 M21.4 344.8 l1.6 1.6 M24.4 341.8 l1.6 1.6 M27.4 338.8 l1.6 1.6"/></g><g fill="none" stroke="#555" stroke-width="1"><circle cx="23.5" cy="377" r="7.2"/><line x1="23.5" y1="373.5" x2="23.5" y2="380.5"/><line x1="20" y1="377" x2="27" y2="377"/><line x1="28.7" y1="382.2" x2="32" y2="385.5"/></g><line x1="1" y1="400.5" x2="48" y2="400.5" stroke="#e6e6e6"/><g fill="none" stroke="#555" stroke-width="1"><path d="M17.5 430 L17.5 421.5 A7 7 0 0 1 31.5 421.5 L31.5 430 L27.5 430 L27.5 421.5 A3 3 0 0 0 21.5 421.5 L21.5 430 Z"/><line x1="17.5" y1="426" x2="21.5" y2="426"/><line x1="27.5" y1="426" x2="31.5" y2="426"/></g><g fill="none" stroke="#555" stroke-width="1"><path d="M15 459.5 L16.3 454.6 L25.6 445.3 L29.2 448.9 L19.9 458.2 Z M16.3 454.6 L19.9 458.2 M23.8 447.1 L27.4 450.7"/><rect x="25.5" y="458.2" width="8" height="6" rx="1"/><path d="M27.3 458.2 L27.3 456.3 A2.2 2.2 0 0 1 31.7 456.3"/></g><g fill="none" stroke="#555" stroke-width="1"><rect x="17.5" y="485.5" width="14.2" height="11.2" rx="1.5"/><path d="M21 485.5 L21 481.8 A3.5 3.5 0 0 1 28 481.8 L28 482.6"/></g><rect x="23.9" y="490.2" width="1.4" height="2.5" fill="#555"/><g fill="none" stroke="#555" stroke-width="1"><path d="M15.8 519.6 Q24.5 506.5 33.2 519.6 Q24.5 532.7 15.8 519.6 Z"/></g><circle cx="24.6" cy="519.7" r="2.8" fill="#555"/><g fill="none" stroke="#555" stroke-width="1"><path d="M24.5 554 L33 560.7 L24.5 567.2 L16 560.7 Z"/><path d="M16 564.2 L24.5 570.7 L33 564.2"/><path d="M16 567.5 L24.5 574 L33 567.5"/></g><g fill="none" stroke="#555" stroke-width="1"><path d="M17.5 590 L31 590 M21.5 590 L21.5 588.5 L27 588.5 L27 590"/><path d="M18.5 590.5 L18.5 603.5 Q18.5 605.3 20.3 605.3 L28.2 605.3 Q30 605.3 30 603.5 L30 590.5"/><line x1="22" y1="593" x2="22" y2="602"/><line x1="24.3" y1="593" x2="24.3" y2="602"/><line x1="26.6" y1="593" x2="26.6" y2="602"/></g><g fill="none" stroke="#555" stroke-width="1"><rect x="191.8" y="65" width="3.4" height="12"/><line x1="193.5" y1="62" x2="193.5" y2="65"/><line x1="193.5" y1="77" x2="193.5" y2="80.3"/><rect x="198.6" y="68.5" width="3.8" height="5.6"/><line x1="200.5" y1="65.2" x2="200.5" y2="68.5"/><line x1="200.5" y1="74.1" x2="200.5" y2="77.7"/></g><g fill="none" stroke="#555" stroke-width="1"><circle cx="231" cy="64.3" r="0.9"/><line x1="231" y1="65.2" x2="231" y2="68.8"/><circle cx="231" cy="70.7" r="1.9"/><path d="M223.3 71.8 L229.1 70.9 M232.9 70.9 L238.6 71.8"/><path d="M223.3 72 L220.9 76.5 M223.3 72 L225.9 76.5 M238.3 72 L235.7 76.5 M238.3 72 L240.9 76.5"/><path d="M220.5 76.5 L226.3 76.5 A2.9 2.9 0 0 1 220.5 76.5 Z"/><path d="M235.3 76.5 L241.1 76.5 A2.9 2.9 0 0 1 235.3 76.5 Z"/></g><path d="M258.5 74.5 L263.5 69.8 L270 73.8 L275.2 69.2" fill="none" stroke="#555" stroke-width="1" stroke-width="1.1" stroke-linejoin="round"/><path d="M304.5 76 Q304.5 69 297.5 69 L294.5 69 M297 66 L294 69 L297 72" fill="none" stroke="#555" stroke-width="1"/><path d="M317 76 Q317 68 325 68 L328.5 68 M326 65 L329 68 L326 71" fill="none" stroke="#ccc" stroke-width="1"/><g fill="none" stroke="#555" stroke-width="1"><path d="M460.5 66.5 L464 66.5 L465.5 63.5 L473.5 63.5 L475 66.5 L478.5 66.5 L478.5 78.5 L460.5 78.5 Z" stroke-linejoin="round"/><circle cx="469.5" cy="72" r="3.8"/></g><g fill="none" stroke="#555" stroke-width="1"><path d="M516.93 69.29 L516.93 72.71 L514.52 72.86 L514.07 73.94 L515.67 75.75 L513.25 78.17 L511.44 76.57 L510.36 77.02 L510.21 79.43 L506.79 79.43 L506.64 77.02 L505.56 76.57 L503.75 78.17 L501.33 75.75 L502.93 73.94 L502.48 72.86 L500.07 72.71 L500.07 69.29 L502.48 69.14 L502.93 68.06 L501.33 66.25 L503.75 63.83 L505.56 65.43 L506.64 64.98 L506.79 62.57 L510.21 62.57 L510.36 64.98 L511.44 65.43 L513.25 63.83 L515.67 66.25 L514.07 68.06 L514.52 69.14 Z" stroke-linejoin="round"/><circle cx="508.5" cy="71" r="2.4"/></g><g fill="none" stroke="#555" stroke-width="1.1"><path d="M536.5 69 L536.5 64.5 L541 64.5 M536.8 64.8 L541.5 69.5 M546 64.5 L550.5 64.5 L550.5 69 M550.2 64.8 L545.5 69.5 M536.5 73.5 L536.5 78 L541 78 M536.8 77.7 L541.5 73 M546 78 L550.5 78 L550.5 73.5 M550.2 77.7 L545.5 73"/></g><g fill="none" stroke="#666" stroke-width="1.4"><path d="M570.7 61.7 L583.5 61.7 L587.3 65.5 L587.3 78.3 L570.7 78.3 Z"/><path d="M573.8 61.7 L573.8 67 L582.3 67 L582.3 61.7"/><path d="M573.5 78.3 L573.5 71.5 L584.5 71.5 L584.5 78.3"/></g><rect x="575.5" y="63.3" width="1.5" height="2.2" fill="#666"/></svg>
<svg width="1219" height="687"><defs><clipPath id="c1"><rect x="53.5" y="93.5" width="486" height="502"/></clipPath></defs><g clip-path="url(#c1)"><g stroke="#e9ecf1" stroke-width="1"><line x1="54" y1="130.5" x2="539" y2="130.5"/><line x1="54" y1="166.8" x2="539" y2="166.8"/><line x1="54" y1="203.0" x2="539" y2="203.0"/><line x1="54" y1="239.2" x2="539" y2="239.2"/><line x1="54" y1="275.5" x2="539" y2="275.5"/><line x1="54" y1="311.8" x2="539" y2="311.8"/><line x1="54" y1="348.0" x2="539" y2="348.0"/><line x1="54" y1="384.2" x2="539" y2="384.2"/><line x1="54" y1="420.5" x2="539" y2="420.5"/><line x1="54" y1="456.8" x2="539" y2="456.8"/><line x1="54" y1="493.0" x2="539" y2="493.0"/><line x1="54" y1="529.2" x2="539" y2="529.2"/><line x1="54" y1="565.5" x2="539" y2="565.5"/><line x1="125.5" y1="94" x2="125.5" y2="595"/><line x1="256.5" y1="94" x2="256.5" y2="595"/><line x1="344.5" y1="94" x2="344.5" y2="595"/><line x1="414.5" y1="94" x2="414.5" y2="595"/><line x1="519.5" y1="94" x2="519.5" y2="595"/></g>
<path d="M53.9 119.2 C55.0 125.1 58.1 142.6 60.5 154.6 C62.9 166.6 65.8 179.9 68.4 191.3 C71.0 202.7 73.6 213.6 76.2 222.8 C78.8 232.0 81.2 238.8 84.1 246.4 C86.9 254.1 91.1 264.0 93.3 268.7 C95.5 273.4 96.0 273.2 97.5 274.5 C99.0 275.8 100.9 277.4 102.5 276.6 C104.1 275.9 105.5 273.1 107.0 270.0 C108.5 266.9 109.5 260.6 111.6 258.2 C113.7 255.8 116.4 255.4 119.5 255.6 C122.6 255.8 127.2 259.0 130.0 259.3 C132.8 259.6 134.3 258.5 136.5 257.2 C138.7 255.9 141.1 253.7 143.1 251.4 C145.1 249.1 146.6 245.0 148.3 243.5 C150.1 242.0 150.1 242.4 153.6 242.2 C157.1 242.0 164.5 241.6 169.3 242.2 C174.1 242.8 178.7 245.1 182.4 245.6 C186.1 246.1 188.4 244.7 191.5 244.9 C194.6 245.1 198.1 247.0 200.7 247.0 C203.3 247.0 205.4 247.2 207.2 244.9 C208.9 242.6 209.7 237.7 211.2 233.1 C212.7 228.5 214.7 223.5 216.4 217.4 C218.1 211.3 219.8 203.0 221.6 196.4 C223.3 189.8 224.7 185.5 226.9 178.1 C229.1 170.7 232.5 158.9 234.7 151.9 C236.9 144.9 238.0 140.6 240.0 136.2 C242.0 131.8 244.3 128.1 246.5 125.7 C248.7 123.3 250.7 122.3 253.1 121.8 C255.5 121.3 258.3 121.5 260.9 122.6 C263.5 123.7 266.4 126.0 268.8 128.3 C271.2 130.6 273.6 134.0 275.3 136.2 C277.1 138.4 276.9 139.3 279.3 141.4 C281.8 143.5 286.4 148.5 290.0 148.9 C293.6 149.3 297.6 143.0 300.7 143.7 C303.8 144.4 305.5 148.8 308.3 152.9 C311.1 157.0 314.4 164.1 317.5 168.2 C320.6 172.3 323.6 173.3 326.7 177.4 C329.8 181.5 332.8 188.3 335.8 192.6 C338.9 196.9 341.9 199.0 345.0 203.3 C348.1 207.6 351.1 212.5 354.2 218.6 C357.2 224.7 360.8 233.4 363.3 240.0 C365.8 246.6 366.8 251.7 369.4 258.3 C371.9 264.9 375.5 274.4 378.6 279.7 C381.7 285.0 385.0 285.3 387.8 290.4 C390.6 295.5 392.6 304.4 395.4 310.3 C398.2 316.2 401.6 322.6 404.6 325.5 C407.7 328.4 410.9 327.4 413.7 328.0 C416.5 328.6 418.6 331.1 421.4 329.2 C424.2 327.3 429.1 318.5 430.6 316.4 L430.6 551.0  C429.3 545.7 425.7 528.2 423.0 519.3 C420.3 510.4 417.1 502.8 414.2 497.5 C411.3 492.2 408.6 490.1 405.5 487.7 C402.4 485.3 399.0 486.4 395.7 483.3 C392.4 480.2 388.8 474.4 385.9 469.1 C383.0 463.8 380.2 456.1 378.2 451.7 C376.2 447.3 376.5 443.6 373.8 442.9 C371.1 442.2 365.2 445.7 361.8 447.3 C358.4 448.9 355.6 453.2 353.1 452.3 C350.6 451.4 348.8 445.9 346.6 441.8 C344.4 437.7 342.8 434.6 340.0 427.6 C337.2 420.6 332.6 408.1 329.8 400.0 C327.0 391.9 325.4 386.2 323.2 379.0 C321.0 371.8 319.1 363.6 316.7 356.8 C314.3 350.1 311.4 344.2 308.8 338.5 C306.2 332.8 303.2 327.3 301.0 322.7 C298.8 318.1 297.4 313.5 295.7 311.0 C294.0 308.5 293.0 306.9 291.0 307.8 C289.0 308.7 286.2 313.3 283.9 316.2 C281.6 319.1 279.3 320.4 277.4 325.4 C275.4 330.4 274.8 338.2 272.2 346.3 C269.6 354.4 265.2 364.9 261.7 373.8 C258.2 382.8 254.0 394.1 251.2 400.0 C248.3 405.9 246.8 407.0 244.6 409.2 C242.4 411.4 240.5 413.3 238.1 413.1 C235.7 412.9 232.3 410.0 230.2 407.9 C228.1 405.8 227.5 405.3 225.3 400.3 C223.1 395.3 220.2 383.0 217.1 377.8 C214.0 372.6 210.4 370.6 207.0 369.3 C203.6 368.0 199.9 370.0 196.8 370.0 C193.7 370.0 191.0 370.2 188.6 369.3 C186.2 368.4 184.9 364.5 182.5 364.6 C180.1 364.7 176.7 368.2 174.3 369.7 C171.9 371.2 170.6 373.9 168.2 373.4 C165.8 372.9 162.7 368.0 160.0 366.6 C157.3 365.2 154.3 364.7 151.9 365.2 C149.5 365.7 148.5 365.6 145.8 369.7 C143.1 373.8 138.2 384.2 135.6 390.0 C133.0 395.8 132.3 398.7 130.4 404.3 C128.5 409.9 126.8 416.8 124.3 423.6 C121.8 430.4 117.2 439.3 115.2 445.0 C113.2 450.7 113.8 455.2 112.1 457.8 C110.4 460.4 107.4 459.8 105.0 460.3 C102.6 460.8 100.5 459.8 97.9 460.7 C95.4 461.6 91.8 464.6 89.7 465.8 C87.7 467.0 87.5 466.2 85.6 468.0 C83.7 469.8 81.0 473.0 78.5 476.6 C76.0 480.2 72.8 485.7 70.4 489.8 C68.0 493.9 66.3 497.9 64.3 501.0 C62.3 504.1 60.3 507.2 58.6 508.5 C56.9 509.8 54.9 508.5 54.1 508.5 Z" fill="#3f3fa8" fill-opacity="0.25" stroke="none"/>
<path d="M54.1 313.6 C55.1 315.8 57.8 322.3 60.2 326.9 C62.6 331.5 65.2 337.2 68.3 341.1 C71.3 345.0 75.1 347.2 78.5 350.3 C81.9 353.4 86.0 356.8 88.7 359.5 C91.4 362.2 92.6 365.1 94.8 366.6 C97.0 368.1 99.6 369.4 102.0 368.7 C104.4 368.0 106.5 365.7 109.1 362.6 C111.6 359.5 114.6 353.9 117.3 350.3 C120.0 346.7 122.4 344.5 125.4 341.1 C128.5 337.7 132.5 334.3 135.6 329.9 C138.7 325.5 141.2 318.9 143.8 314.7 C146.4 310.5 148.5 306.1 150.9 304.5 C153.3 302.9 155.1 304.3 158.0 304.9 C160.9 305.5 164.1 308.0 168.2 308.1 C172.3 308.2 178.4 305.6 182.5 305.5 C186.6 305.4 189.3 307.0 192.7 307.5 C196.1 308.0 199.5 309.7 202.9 308.5 C206.3 307.3 209.7 303.8 213.1 300.4 C216.5 297.0 219.7 292.4 223.3 288.2 C226.9 284.0 229.8 280.7 234.7 275.0 C239.6 269.3 247.7 260.2 253.0 254.0 C258.3 247.8 262.6 241.5 266.5 238.0 C270.4 234.5 273.2 234.6 276.6 233.0 C280.0 231.4 284.1 229.2 287.0 228.5 C289.9 227.8 291.5 227.7 294.0 228.6 C296.5 229.5 298.8 228.9 302.2 233.9 C305.6 238.9 310.3 250.2 314.4 258.3 C318.5 266.4 322.6 275.2 326.7 282.8 C330.8 290.4 334.8 297.1 338.9 304.2 C343.0 311.3 347.5 319.6 351.1 325.5 C354.7 331.4 355.3 331.9 360.3 339.9 C365.3 347.9 374.9 362.9 381.3 373.4 C387.7 383.9 393.6 396.6 398.8 403.0 C404.0 409.4 407.4 405.9 412.7 411.8 C418.0 417.7 427.6 434.1 430.6 438.6" fill="none" stroke="#c9474f" stroke-width="1.1"/>
<line x1="54.8" y1="377.5" x2="54.8" y2="412.0" stroke="#4ea672" stroke-opacity="0.35" stroke-width="1"/><rect x="53.3" y="381.5" width="3" height="16.0" fill="#4ea672"/><line x1="59.2" y1="376.0" x2="59.2" y2="391.0" stroke="#dc4a5c" stroke-opacity="0.35" stroke-width="1"/><rect x="57.7" y="380.0" width="3" height="7.0" fill="#dc4a5c"/><line x1="63.5" y1="336.0" x2="63.5" y2="395.0" stroke="#4ea672" stroke-opacity="0.35" stroke-width="1"/><rect x="62.0" y="340.0" width="3" height="44.7" fill="#4ea672"/><line x1="67.9" y1="292.7" x2="67.9" y2="345.5" stroke="#4ea672" stroke-opacity="0.35" stroke-width="1"/><rect x="66.4" y="296.7" width="3" height="44.8" fill="#4ea672"/><line x1="72.3" y1="275.0" x2="72.3" y2="308.7" stroke="#dc4a5c" stroke-opacity="0.35" stroke-width="1"/><rect x="70.8" y="289.7" width="3" height="15.0" fill="#dc4a5c"/><line x1="76.6" y1="276.0" x2="76.6" y2="321.5" stroke="#4ea672" stroke-opacity="0.35" stroke-width="1"/><rect x="75.1" y="305.7" width="3" height="11.8" fill="#4ea672"/><line x1="81.0" y1="297.5" x2="81.0" y2="313.5" stroke="#dc4a5c" stroke-opacity="0.35" stroke-width="1"/><rect x="79.5" y="301.5" width="3" height="8.0" fill="#dc4a5c"/><line x1="85.4" y1="306.0" x2="85.4" y2="358.0" stroke="#dc4a5c" stroke-opacity="0.35" stroke-width="1"/><rect x="83.9" y="310.0" width="3" height="41.8" fill="#dc4a5c"/><line x1="89.7" y1="341.0" x2="89.7" y2="355.8" stroke="#dc4a5c" stroke-opacity="0.35" stroke-width="1"/><rect x="88.2" y="345.0" width="3" height="6.8" fill="#dc4a5c"/><line x1="94.1" y1="347.0" x2="94.1" y2="366.3" stroke="#dc4a5c" stroke-opacity="0.35" stroke-width="1"/><rect x="92.6" y="351.0" width="3" height="11.3" fill="#dc4a5c"/><line x1="98.5" y1="332.7" x2="98.5" y2="366.3" stroke="#4ea672" stroke-opacity="0.35" stroke-width="1"/><rect x="97.0" y="336.7" width="3" height="25.6" fill="#4ea672"/><line x1="102.8" y1="312.0" x2="102.8" y2="337.5" stroke="#4ea672" stroke-opacity="0.35" stroke-width="1"/><rect x="101.3" y="316.0" width="3" height="17.5" fill="#4ea672"/><line x1="107.2" y1="296.0" x2="107.2" y2="331.0" stroke="#4ea672" stroke-opacity="0.35" stroke-width="1"/><rect x="105.7" y="300.0" width="3" height="27.0" fill="#4ea672"/><line x1="111.6" y1="279.3" x2="111.6" y2="307.0" stroke="#4ea672" stroke-opacity="0.35" stroke-width="1"/><rect x="110.1" y="283.3" width="3" height="19.7" fill="#4ea672"/><line x1="115.9" y1="289.0" x2="115.9" y2="305.5" stroke="#dc4a5c" stroke-opacity="0.35" stroke-width="1"/><rect x="114.4" y="293.0" width="3" height="8.5" fill="#dc4a5c"/><line x1="120.3" y1="297.5" x2="120.3" y2="321.5" stroke="#dc4a5c" stroke-opacity="0.35" stroke-width="1"/><rect x="118.8" y="301.5" width="3" height="16.0" fill="#dc4a5c"/><line x1="124.7" y1="315.0" x2="124.7" y2="330.0" stroke="#dc4a5c" stroke-opacity="0.35" stroke-width="1"/><rect x="123.2" y="319.0" width="3" height="7.0" fill="#dc4a5c"/><line x1="129.0" y1="284.8" x2="129.0" y2="324.7" stroke="#4ea672" stroke-opacity="0.35" stroke-width="1"/><rect x="127.5" y="288.8" width="3" height="31.9" fill="#4ea672"/><line x1="133.4" y1="278.4" x2="133.4" y2="294.4" stroke="#4ea672" stroke-opacity="0.35" stroke-width="1"/><rect x="131.9" y="282.4" width="3" height="8.0" fill="#4ea672"/><line x1="137.8" y1="270.4" x2="137.8" y2="286.4" stroke="#4ea672" stroke-opacity="0.35" stroke-width="1"/><rect x="136.3" y="274.4" width="3" height="8.0" fill="#4ea672"/><line x1="142.1" y1="262.4" x2="142.1" y2="273.6" stroke="#4ea672" stroke-opacity="0.35" stroke-width="1"/><rect x="140.6" y="266.4" width="3" height="3.2" fill="#4ea672"/><line x1="146.5" y1="223.0" x2="146.5" y2="275.2" stroke="#4ea672" stroke-opacity="0.35" stroke-width="1"/><rect x="145.0" y="237.6" width="3" height="33.6" fill="#4ea672"/><line x1="150.9" y1="238.4" x2="150.9" y2="275.2" stroke="#dc4a5c" stroke-opacity="0.35" stroke-width="1"/><rect x="149.4" y="242.4" width="3" height="28.8" fill="#dc4a5c"/><line x1="155.2" y1="272.0" x2="155.2" y2="292.8" stroke="#dc4a5c" stroke-opacity="0.35" stroke-width="1"/><rect x="153.7" y="276.0" width="3" height="12.8" fill="#dc4a5c"/><line x1="159.6" y1="283.9" x2="159.6" y2="334.0" stroke="#dc4a5c" stroke-opacity="0.35" stroke-width="1"/><rect x="158.1" y="287.9" width="3" height="38.4" fill="#dc4a5c"/><line x1="164.0" y1="315.8" x2="164.0" y2="331.7" stroke="#4ea672" stroke-opacity="0.35" stroke-width="1"/><rect x="162.5" y="319.8" width="3" height="7.9" fill="#4ea672"/><line x1="168.3" y1="318.8" x2="168.3" y2="365.0" stroke="#dc4a5c" stroke-opacity="0.35" stroke-width="1"/><rect x="166.8" y="322.8" width="3" height="28.8" fill="#dc4a5c"/><line x1="172.7" y1="325.8" x2="172.7" y2="352.0" stroke="#4ea672" stroke-opacity="0.35" stroke-width="1"/><rect x="171.2" y="329.8" width="3" height="18.2" fill="#4ea672"/><line x1="177.1" y1="325.8" x2="177.1" y2="353.0" stroke="#dc4a5c" stroke-opacity="0.35" stroke-width="1"/><rect x="175.6" y="329.8" width="3" height="19.2" fill="#dc4a5c"/><line x1="181.4" y1="331.4" x2="181.4" y2="358.2" stroke="#4ea672" stroke-opacity="0.35" stroke-width="1"/><rect x="179.9" y="335.4" width="3" height="18.8" fill="#4ea672"/><line x1="185.8" y1="334.0" x2="185.8" y2="344.0" stroke="#dc4a5c" stroke-opacity="0.35" stroke-width="1"/><rect x="184.3" y="338.0" width="3" height="2.0" fill="#dc4a5c"/><line x1="190.2" y1="334.8" x2="190.2" y2="353.8" stroke="#dc4a5c" stroke-opacity="0.35" stroke-width="1"/><rect x="188.7" y="338.8" width="3" height="11.0" fill="#dc4a5c"/><line x1="194.5" y1="311.5" x2="194.5" y2="365.0" stroke="#4ea672" stroke-opacity="0.35" stroke-width="1"/><rect x="193.0" y="315.5" width="3" height="39.5" fill="#4ea672"/><line x1="198.9" y1="297.9" x2="198.9" y2="317.7" stroke="#4ea672" stroke-opacity="0.35" stroke-width="1"/><rect x="197.4" y="301.9" width="3" height="11.8" fill="#4ea672"/><line x1="203.3" y1="292.6" x2="203.3" y2="303.2" stroke="#dc4a5c" stroke-opacity="0.35" stroke-width="1"/><rect x="201.8" y="296.6" width="3" height="2.6" fill="#dc4a5c"/><line x1="207.6" y1="288.3" x2="207.6" y2="306.7" stroke="#4ea672" stroke-opacity="0.35" stroke-width="1"/><rect x="206.1" y="292.3" width="3" height="10.4" fill="#4ea672"/><line x1="212.0" y1="221.6" x2="212.0" y2="294.0" stroke="#4ea672" stroke-opacity="0.35" stroke-width="1"/><rect x="210.5" y="225.6" width="3" height="64.4" fill="#4ea672"/><line x1="216.4" y1="204.0" x2="216.4" y2="228.2" stroke="#dc4a5c" stroke-opacity="0.35" stroke-width="1"/><rect x="214.9" y="217.2" width="3" height="7.0" fill="#dc4a5c"/><line x1="220.7" y1="165.0" x2="220.7" y2="228.2" stroke="#4ea672" stroke-opacity="0.35" stroke-width="1"/><rect x="219.2" y="181.5" width="3" height="42.7" fill="#4ea672"/><line x1="225.1" y1="136.0" x2="225.1" y2="182.8" stroke="#4ea672" stroke-opacity="0.35" stroke-width="1"/><rect x="223.6" y="144.0" width="3" height="34.8" fill="#4ea672"/><line x1="229.5" y1="145.2" x2="229.5" y2="169.8" stroke="#dc4a5c" stroke-opacity="0.35" stroke-width="1"/><rect x="228.0" y="149.2" width="3" height="16.6" fill="#dc4a5c"/><line x1="233.8" y1="155.7" x2="233.8" y2="222.0" stroke="#dc4a5c" stroke-opacity="0.35" stroke-width="1"/><rect x="232.3" y="159.7" width="3" height="28.7" fill="#dc4a5c"/><line x1="238.2" y1="180.4" x2="238.2" y2="190.7" stroke="#dc4a5c" stroke-opacity="0.35" stroke-width="1"/><rect x="236.7" y="184.4" width="3" height="2.3" fill="#dc4a5c"/><line x1="242.6" y1="185.3" x2="242.6" y2="217.7" stroke="#dc4a5c" stroke-opacity="0.35" stroke-width="1"/><rect x="241.1" y="189.3" width="3" height="24.4" fill="#dc4a5c"/><line x1="246.9" y1="199.3" x2="246.9" y2="220.3" stroke="#4ea672" stroke-opacity="0.35" stroke-width="1"/><rect x="245.4" y="203.3" width="3" height="13.0" fill="#4ea672"/><line x1="251.3" y1="201.0" x2="251.3" y2="230.8" stroke="#dc4a5c" stroke-opacity="0.35" stroke-width="1"/><rect x="249.8" y="205.0" width="3" height="21.8" fill="#dc4a5c"/><line x1="255.7" y1="222.8" x2="255.7" y2="245.6" stroke="#dc4a5c" stroke-opacity="0.35" stroke-width="1"/><rect x="254.2" y="226.8" width="3" height="14.8" fill="#dc4a5c"/><line x1="260.0" y1="244.6" x2="260.0" y2="255.4" stroke="#4ea672" stroke-opacity="0.35" stroke-width="1"/><rect x="258.5" y="248.6" width="3" height="2.8" fill="#4ea672"/><line x1="264.4" y1="240.4" x2="264.4" y2="287.0" stroke="#dc4a5c" stroke-opacity="0.35" stroke-width="1"/><rect x="262.9" y="244.4" width="3" height="22.3" fill="#dc4a5c"/><line x1="268.8" y1="238.7" x2="268.8" y2="270.7" stroke="#4ea672" stroke-opacity="0.35" stroke-width="1"/><rect x="267.3" y="242.7" width="3" height="24.0" fill="#4ea672"/><line x1="273.1" y1="243.0" x2="273.1" y2="261.5" stroke="#dc4a5c" stroke-opacity="0.35" stroke-width="1"/><rect x="271.6" y="247.0" width="3" height="10.5" fill="#dc4a5c"/><line x1="277.5" y1="243.0" x2="277.5" y2="258.0" stroke="#4ea672" stroke-opacity="0.35" stroke-width="1"/><rect x="276.0" y="247.0" width="3" height="7.0" fill="#4ea672"/><line x1="281.9" y1="237.0" x2="281.9" y2="290.0" stroke="#dc4a5c" stroke-opacity="0.35" stroke-width="1"/><rect x="280.4" y="241.0" width="3" height="41.8" fill="#dc4a5c"/><line x1="286.3" y1="261.0" x2="286.3" y2="283.3" stroke="#4ea672" stroke-opacity="0.35" stroke-width="1"/><rect x="284.8" y="265.0" width="3" height="14.3" fill="#4ea672"/><line x1="290.6" y1="255.2" x2="290.6" y2="274.2" stroke="#dc4a5c" stroke-opacity="0.35" stroke-width="1"/><rect x="289.1" y="259.2" width="3" height="11.0" fill="#dc4a5c"/><line x1="295.0" y1="265.7" x2="295.0" y2="313.8" stroke="#dc4a5c" stroke-opacity="0.35" stroke-width="1"/><rect x="293.5" y="269.7" width="3" height="40.1" fill="#dc4a5c"/><line x1="299.4" y1="305.0" x2="299.4" y2="317.3" stroke="#dc4a5c" stroke-opacity="0.35" stroke-width="1"/><rect x="297.9" y="309.0" width="3" height="4.3" fill="#dc4a5c"/><line x1="303.7" y1="265.7" x2="303.7" y2="313.8" stroke="#4ea672" stroke-opacity="0.35" stroke-width="1"/><rect x="302.2" y="269.7" width="3" height="40.1" fill="#4ea672"/><line x1="308.1" y1="271.5" x2="308.1" y2="326.6" stroke="#dc4a5c" stroke-opacity="0.35" stroke-width="1"/><rect x="306.6" y="275.5" width="3" height="47.1" fill="#dc4a5c"/><line x1="312.5" y1="330.9" x2="312.5" y2="384.0" stroke="#dc4a5c" stroke-opacity="0.35" stroke-width="1"/><rect x="311.0" y="334.9" width="3" height="19.1" fill="#dc4a5c"/><line x1="316.8" y1="322.0" x2="316.8" y2="357.2" stroke="#dc4a5c" stroke-opacity="0.35" stroke-width="1"/><rect x="315.3" y="347.0" width="3" height="6.2" fill="#dc4a5c"/><line x1="321.2" y1="352.7" x2="321.2" y2="396.4" stroke="#dc4a5c" stroke-opacity="0.35" stroke-width="1"/><rect x="319.7" y="356.7" width="3" height="35.7" fill="#dc4a5c"/><line x1="325.6" y1="385.8" x2="325.6" y2="412.0" stroke="#dc4a5c" stroke-opacity="0.35" stroke-width="1"/><rect x="324.1" y="389.8" width="3" height="18.2" fill="#dc4a5c"/><line x1="329.9" y1="357.0" x2="329.9" y2="418.0" stroke="#4ea672" stroke-opacity="0.35" stroke-width="1"/><rect x="328.4" y="361.0" width="3" height="51.5" fill="#4ea672"/><line x1="334.3" y1="362.0" x2="334.3" y2="390.3" stroke="#dc4a5c" stroke-opacity="0.35" stroke-width="1"/><rect x="332.8" y="366.0" width="3" height="20.3" fill="#dc4a5c"/><line x1="338.7" y1="382.9" x2="338.7" y2="414.8" stroke="#dc4a5c" stroke-opacity="0.35" stroke-width="1"/><rect x="337.2" y="386.9" width="3" height="23.9" fill="#dc4a5c"/><line x1="343.0" y1="406.8" x2="343.0" y2="416.5" stroke="#dc4a5c" stroke-opacity="0.35" stroke-width="1"/><rect x="341.5" y="410.8" width="3" height="1.7" fill="#dc4a5c"/><line x1="347.4" y1="402.7" x2="347.4" y2="412.0" stroke="#4ea672" stroke-opacity="0.35" stroke-width="1"/><rect x="345.9" y="406.7" width="3" height="1.5" fill="#4ea672"/><line x1="351.8" y1="382.9" x2="351.8" y2="403.8" stroke="#4ea672" stroke-opacity="0.35" stroke-width="1"/><rect x="350.3" y="386.9" width="3" height="12.9" fill="#4ea672"/><line x1="356.1" y1="357.0" x2="356.1" y2="389.5" stroke="#4ea672" stroke-opacity="0.35" stroke-width="1"/><rect x="354.6" y="361.0" width="3" height="24.5" fill="#4ea672"/><line x1="360.5" y1="342.2" x2="360.5" y2="357.2" stroke="#4ea672" stroke-opacity="0.35" stroke-width="1"/><rect x="359.0" y="346.2" width="3" height="7.0" fill="#4ea672"/><line x1="364.9" y1="332.6" x2="364.9" y2="370.7" stroke="#dc4a5c" stroke-opacity="0.35" stroke-width="1"/><rect x="363.4" y="336.6" width="3" height="30.1" fill="#dc4a5c"/><line x1="369.2" y1="342.2" x2="369.2" y2="364.5" stroke="#4ea672" stroke-opacity="0.35" stroke-width="1"/><rect x="367.7" y="346.2" width="3" height="14.3" fill="#4ea672"/><line x1="373.6" y1="320.0" x2="373.6" y2="395.5" stroke="#dc4a5c" stroke-opacity="0.35" stroke-width="1"/><rect x="372.1" y="338.8" width="3" height="52.7" fill="#dc4a5c"/><line x1="378.0" y1="392.1" x2="378.0" y2="462.4" stroke="#dc4a5c" stroke-opacity="0.35" stroke-width="1"/><rect x="376.5" y="396.1" width="3" height="62.3" fill="#dc4a5c"/><line x1="382.3" y1="438.0" x2="382.3" y2="452.5" stroke="#4ea672" stroke-opacity="0.35" stroke-width="1"/><rect x="380.8" y="442.0" width="3" height="6.5" fill="#4ea672"/><line x1="386.7" y1="427.9" x2="386.7" y2="476.9" stroke="#dc4a5c" stroke-opacity="0.35" stroke-width="1"/><rect x="385.2" y="431.9" width="3" height="41.0" fill="#dc4a5c"/><line x1="391.1" y1="466.0" x2="391.1" y2="505.0" stroke="#4ea672" stroke-opacity="0.35" stroke-width="1"/><rect x="389.6" y="470.0" width="3" height="5.5" fill="#4ea672"/><line x1="395.4" y1="467.7" x2="395.4" y2="478.7" stroke="#dc4a5c" stroke-opacity="0.35" stroke-width="1"/><rect x="393.9" y="471.7" width="3" height="3.0" fill="#dc4a5c"/><line x1="399.8" y1="398.2" x2="399.8" y2="471.7" stroke="#4ea672" stroke-opacity="0.35" stroke-width="1"/><rect x="398.3" y="402.2" width="3" height="65.5" fill="#4ea672"/><line x1="404.2" y1="408.7" x2="404.2" y2="446.4" stroke="#dc4a5c" stroke-opacity="0.35" stroke-width="1"/><rect x="402.7" y="412.7" width="3" height="29.7" fill="#dc4a5c"/><line x1="408.5" y1="427.0" x2="408.5" y2="447.2" stroke="#4ea672" stroke-opacity="0.35" stroke-width="1"/><rect x="407.0" y="431.0" width="3" height="12.2" fill="#4ea672"/><line x1="412.9" y1="423.2" x2="412.9" y2="469.0" stroke="#dc4a5c" stroke-opacity="0.35" stroke-width="1"/><rect x="411.4" y="427.2" width="3" height="37.8" fill="#dc4a5c"/><line x1="417.3" y1="457.6" x2="417.3" y2="500.5" stroke="#dc4a5c" stroke-opacity="0.35" stroke-width="1"/><rect x="415.8" y="461.6" width="3" height="34.9" fill="#dc4a5c"/><line x1="421.6" y1="491.6" x2="421.6" y2="509.2" stroke="#dc4a5c" stroke-opacity="0.35" stroke-width="1"/><rect x="420.1" y="495.6" width="3" height="9.6" fill="#dc4a5c"/><line x1="426.0" y1="504.0" x2="426.0" y2="539.7" stroke="#dc4a5c" stroke-opacity="0.35" stroke-width="1"/><rect x="424.5" y="508.0" width="3" height="27.7" fill="#dc4a5c"/><line x1="430.4" y1="535.2" x2="430.4" y2="571.0" stroke="#dc4a5c" stroke-opacity="0.35" stroke-width="1"/><rect x="428.9" y="539.2" width="3" height="27.8" fill="#dc4a5c"/>
<path d="M53.9 119.2 C55.0 125.1 58.1 142.6 60.5 154.6 C62.9 166.6 65.8 179.9 68.4 191.3 C71.0 202.7 73.6 213.6 76.2 222.8 C78.8 232.0 81.2 238.8 84.1 246.4 C86.9 254.1 91.1 264.0 93.3 268.7 C95.5 273.4 96.0 273.2 97.5 274.5 C99.0 275.8 100.9 277.4 102.5 276.6 C104.1 275.9 105.5 273.1 107.0 270.0 C108.5 266.9 109.5 260.6 111.6 258.2 C113.7 255.8 116.4 255.4 119.5 255.6 C122.6 255.8 127.2 259.0 130.0 259.3 C132.8 259.6 134.3 258.5 136.5 257.2 C138.7 255.9 141.1 253.7 143.1 251.4 C145.1 249.1 146.6 245.0 148.3 243.5 C150.1 242.0 150.1 242.4 153.6 242.2 C157.1 242.0 164.5 241.6 169.3 242.2 C174.1 242.8 178.7 245.1 182.4 245.6 C186.1 246.1 188.4 244.7 191.5 244.9 C194.6 245.1 198.1 247.0 200.7 247.0 C203.3 247.0 205.4 247.2 207.2 244.9 C208.9 242.6 209.7 237.7 211.2 233.1 C212.7 228.5 214.7 223.5 216.4 217.4 C218.1 211.3 219.8 203.0 221.6 196.4 C223.3 189.8 224.7 185.5 226.9 178.1 C229.1 170.7 232.5 158.9 234.7 151.9 C236.9 144.9 238.0 140.6 240.0 136.2 C242.0 131.8 244.3 128.1 246.5 125.7 C248.7 123.3 250.7 122.3 253.1 121.8 C255.5 121.3 258.3 121.5 260.9 122.6 C263.5 123.7 266.4 126.0 268.8 128.3 C271.2 130.6 273.6 134.0 275.3 136.2 C277.1 138.4 276.9 139.3 279.3 141.4 C281.8 143.5 286.4 148.5 290.0 148.9 C293.6 149.3 297.6 143.0 300.7 143.7 C303.8 144.4 305.5 148.8 308.3 152.9 C311.1 157.0 314.4 164.1 317.5 168.2 C320.6 172.3 323.6 173.3 326.7 177.4 C329.8 181.5 332.8 188.3 335.8 192.6 C338.9 196.9 341.9 199.0 345.0 203.3 C348.1 207.6 351.1 212.5 354.2 218.6 C357.2 224.7 360.8 233.4 363.3 240.0 C365.8 246.6 366.8 251.7 369.4 258.3 C371.9 264.9 375.5 274.4 378.6 279.7 C381.7 285.0 385.0 285.3 387.8 290.4 C390.6 295.5 392.6 304.4 395.4 310.3 C398.2 316.2 401.6 322.6 404.6 325.5 C407.7 328.4 410.9 327.4 413.7 328.0 C416.5 328.6 418.6 331.1 421.4 329.2 C424.2 327.3 429.1 318.5 430.6 316.4" fill="none" stroke="#4a44dc" stroke-width="1.15"/>
<path d="M54.1 508.5 C54.9 508.5 56.9 509.8 58.6 508.5 C60.3 507.2 62.3 504.1 64.3 501.0 C66.3 497.9 68.0 493.9 70.4 489.8 C72.8 485.7 76.0 480.2 78.5 476.6 C81.0 473.0 83.7 469.8 85.6 468.0 C87.5 466.2 87.7 467.0 89.7 465.8 C91.8 464.6 95.4 461.6 97.9 460.7 C100.5 459.8 102.6 460.8 105.0 460.3 C107.4 459.8 110.4 460.4 112.1 457.8 C113.8 455.2 113.2 450.7 115.2 445.0 C117.2 439.3 121.8 430.4 124.3 423.6 C126.8 416.8 128.5 409.9 130.4 404.3 C132.3 398.7 133.0 395.8 135.6 390.0 C138.2 384.2 143.1 373.8 145.8 369.7 C148.5 365.6 149.5 365.7 151.9 365.2 C154.3 364.7 157.3 365.2 160.0 366.6 C162.7 368.0 165.8 372.9 168.2 373.4 C170.6 373.9 171.9 371.2 174.3 369.7 C176.7 368.2 180.1 364.7 182.5 364.6 C184.9 364.5 186.2 368.4 188.6 369.3 C191.0 370.2 193.7 370.0 196.8 370.0 C199.9 370.0 203.6 368.0 207.0 369.3 C210.4 370.6 214.0 372.6 217.1 377.8 C220.2 383.0 223.1 395.3 225.3 400.3 C227.5 405.3 228.1 405.8 230.2 407.9 C232.3 410.0 235.7 412.9 238.1 413.1 C240.5 413.3 242.4 411.4 244.6 409.2 C246.8 407.0 248.3 405.9 251.2 400.0 C254.0 394.1 258.2 382.8 261.7 373.8 C265.2 364.9 269.6 354.4 272.2 346.3 C274.8 338.2 275.4 330.4 277.4 325.4 C279.3 320.4 281.6 319.1 283.9 316.2 C286.2 313.3 289.0 308.7 291.0 307.8 C293.0 306.9 294.0 308.5 295.7 311.0 C297.4 313.5 298.8 318.1 301.0 322.7 C303.2 327.3 306.2 332.8 308.8 338.5 C311.4 344.2 314.3 350.1 316.7 356.8 C319.1 363.6 321.0 371.8 323.2 379.0 C325.4 386.2 327.0 391.9 329.8 400.0 C332.6 408.1 337.2 420.6 340.0 427.6 C342.8 434.6 344.4 437.7 346.6 441.8 C348.8 445.9 350.6 451.4 353.1 452.3 C355.6 453.2 358.4 448.9 361.8 447.3 C365.2 445.7 371.1 442.2 373.8 442.9 C376.5 443.6 376.2 447.3 378.2 451.7 C380.2 456.1 383.0 463.8 385.9 469.1 C388.8 474.4 392.4 480.2 395.7 483.3 C399.0 486.4 402.4 485.3 405.5 487.7 C408.6 490.1 411.3 492.2 414.2 497.5 C417.1 502.8 420.3 510.4 423.0 519.3 C425.7 528.2 429.3 545.7 430.6 551.0" fill="none" stroke="#4a44dc" stroke-width="1.15"/></g><line x1="53.5" y1="566.5" x2="539.5" y2="566.5" stroke="#b05a68" stroke-width="1" stroke-dasharray="1.9,0.8"/><line x1="539.5" y1="93.5" x2="539.5" y2="595.5" stroke="#555" stroke-width="1"/><line x1="53.5" y1="595.5" x2="540" y2="595.5" stroke="#555" stroke-width="1"/></svg>
<svg width="1219" height="687"><line x1="539.5" y1="130.5" x2="543" y2="130.5" stroke="#555"/></svg>
<div class="t" style="top:126.63px;font-size:10.00px;color:#5a5a5a;left:545.30px">2256.0000</div>
<svg width="1219" height="687"><line x1="539.5" y1="166.8" x2="543" y2="166.8" stroke="#555"/></svg>
<div class="t" style="top:162.88px;font-size:10.00px;color:#5a5a5a;left:545.30px">2252.0000</div>
<svg width="1219" height="687"><line x1="539.5" y1="203.0" x2="543" y2="203.0" stroke="#555"/></svg>
<div class="t" style="top:199.13px;font-size:10.00px;color:#5a5a5a;left:545.30px">2248.0000</div>
<svg width="1219" height="687"><line x1="539.5" y1="239.2" x2="543" y2="239.2" stroke="#555"/></svg>
<div class="t" style="top:235.38px;font-size:10.00px;color:#5a5a5a;left:545.30px">2244.0000</div>
<svg width="1219" height="687"><line x1="539.5" y1="275.5" x2="543" y2="275.5" stroke="#555"/></svg>
<div class="t" style="top:271.64px;font-size:10.00px;color:#5a5a5a;left:545.30px">2240.0000</div>
<svg width="1219" height="687"><line x1="539.5" y1="311.8" x2="543" y2="311.8" stroke="#555"/></svg>
<div class="t" style="top:307.89px;font-size:10.00px;color:#5a5a5a;left:545.30px">2236.0000</div>
<svg width="1219" height="687"><line x1="539.5" y1="348.0" x2="543" y2="348.0" stroke="#555"/></svg>
<div class="t" style="top:344.14px;font-size:10.00px;color:#5a5a5a;left:545.30px">2232.0000</div>
<svg width="1219" height="687"><line x1="539.5" y1="384.2" x2="543" y2="384.2" stroke="#555"/></svg>
<div class="t" style="top:380.39px;font-size:10.00px;color:#5a5a5a;left:545.30px">2228.0000</div>
<svg width="1219" height="687"><line x1="539.5" y1="420.5" x2="543" y2="420.5" stroke="#555"/></svg>
<div class="t" style="top:416.64px;font-size:10.00px;color:#5a5a5a;left:545.30px">2224.0000</div>
<svg width="1219" height="687"><line x1="539.5" y1="456.8" x2="543" y2="456.8" stroke="#555"/></svg>
<div class="t" style="top:452.89px;font-size:10.00px;color:#5a5a5a;left:545.30px">2220.0000</div>
<svg width="1219" height="687"><line x1="539.5" y1="493.0" x2="543" y2="493.0" stroke="#555"/></svg>
<div class="t" style="top:489.14px;font-size:10.00px;color:#5a5a5a;left:545.30px">2216.0000</div>
<svg width="1219" height="687"><line x1="539.5" y1="529.2" x2="543" y2="529.2" stroke="#555"/></svg>
<div class="t" style="top:525.38px;font-size:10.00px;color:#5a5a5a;left:545.30px">2212.0000</div>
<div class="a" style="left:540px;top:560px;width:56px;height:13.8px;background:#e44c5e"></div>
<div class="t" style="top:562.37px;font-size:10.20px;color:#fff;font-weight:bold;left:545.00px">2207.9100</div>
<svg width="1219" height="687"><line x1="125.5" y1="595.5" x2="125.5" y2="599" stroke="#555"/></svg>
<div class="t" style="top:599.70px;font-size:10.40px;color:#666;left:125.50px;transform:translateX(-50%)">13:30</div>
<svg width="1219" height="687"><line x1="256.5" y1="595.5" x2="256.5" y2="599" stroke="#555"/></svg>
<div class="t" style="top:599.87px;font-size:10.20px;color:#444;font-weight:bold;left:256.50px;transform:translateX(-50%)">14:00</div>
<svg width="1219" height="687"><line x1="344.5" y1="595.5" x2="344.5" y2="599" stroke="#555"/></svg>
<div class="t" style="top:599.70px;font-size:10.40px;color:#666;left:344.50px;transform:translateX(-50%)">14:20</div>
<svg width="1219" height="687"><line x1="414.5" y1="595.5" x2="414.5" y2="599" stroke="#555"/></svg>
<div class="t" style="top:599.70px;font-size:10.40px;color:#666;left:414.50px;transform:translateX(-50%)">14:36</div>
<svg width="1219" height="687"><line x1="519.5" y1="595.5" x2="519.5" y2="599" stroke="#555"/></svg>
<div class="t" style="top:599.87px;font-size:10.20px;color:#444;font-weight:bold;left:519.50px;transform:translateX(-50%)">15:00</div>
<svg width="1219" height="687"><rect x="59.5" y="106.5" width="10" height="10" rx="1" fill="none" stroke="#666"/><line x1="64.5" y1="108.5" x2="64.5" y2="114.5" stroke="#666"/><line x1="61.5" y1="111.5" x2="67.5" y2="111.5" stroke="#666"/></svg>
<div class="t" style="top:107.31px;font-size:10.50px;color:#555;left:75.50px">O</div>
<div class="t" style="top:107.31px;font-size:10.50px;color:#d9525e;left:86.20px">2210.8700</div>
<div class="t" style="top:107.31px;font-size:10.50px;color:#555;left:140.50px">H</div>
<div class="t" style="top:107.31px;font-size:10.50px;color:#d9525e;left:150.00px">2210.9700</div>
<div class="t" style="top:107.31px;font-size:10.50px;color:#555;left:205.00px">L</div>
<div class="t" style="top:107.31px;font-size:10.50px;color:#d9525e;left:213.50px">2207.5700</div>
<div class="t" style="top:107.31px;font-size:10.50px;color:#555;left:267.50px">C</div>
<div class="t" style="top:107.31px;font-size:10.50px;color:#d9525e;left:277.00px">2207.9100</div>
<div class="t" style="top:104.33px;font-size:13.20px;color:#238a23;right:679.00px">realtime feed</div>
<div class="a" style="left:66.5px;top:553px;width:29px;height:29px;border-radius:50%;background:#fff;border:1.5px solid #f0f1f3"></div>
<svg width="1219" height="687"><path d="M73 573 Q70.8 573 71 569.8 Q71.3 566.8 74 566.3 Q75.2 561.7 79.5 561.8 Q83.3 562 84.2 565.6 Q89.6 565.3 90 570 Q90 573 87.5 573 Z" fill="#3d9be6"/><path d="M71.5 571 L78 565.6 L82.5 571 L87.5 566" fill="none" stroke="#d8f0ff" stroke-width="1.1"/></svg>
<div class="t" style="top:561.62px;font-size:12.50px;color:#5aa6e0;-webkit-text-stroke:0.3px #5aa6e0;text-shadow:1.5px 0 #fff,-1.5px 0 #fff,0 1.5px #fff,0 -1.5px #fff,1px 1px #fff,-1px -1px #fff,1px -1px #fff,-1px 1px #fff;left:104.00px">Chart by TradingView</div>
<div class="a" style="left:43.5px;top:557px;width:8px;height:22.5px;background:#fff;border:1px solid #e0e3eb;border-radius:3px"></div>
<svg width="1219" height="687"><path d="M48.5 565 L46.5 568 L48.5 571" fill="none" stroke="#999" stroke-width="0.9"/></svg>
<div class="t" style="top:617.57px;font-size:10.20px;color:#777;left:368.00px">14:40:42 (UTC)</div>
<div class="t" style="top:617.57px;font-size:10.20px;color:#777;left:464.50px;transform:translateX(-50%)">%</div>
<div class="t" style="top:617.31px;font-size:10.50px;color:#777;left:498.00px;transform:translateX(-50%)">log</div>
<div class="t" style="top:617.06px;font-size:10.80px;color:#5ab8e6;left:538.50px;transform:translateX(-50%)">auto</div>
<div class="a" style="left:449.5px;top:616px;width:1px;height:15px;background:#b8bcc4"></div>
<div class="a" style="left:479.5px;top:616px;width:1px;height:15px;background:#b8bcc4"></div>
<div class="a" style="left:516.5px;top:616px;width:1px;height:15px;background:#b8bcc4"></div>
<div class="a" style="left:560.5px;top:616px;width:1px;height:15px;background:#b8bcc4"></div>
<svg width="1219" height="687"><circle cx="578" cy="622.5" r="4" fill="none" stroke="#666" stroke-width="1.2"/><path d="M582.50 622.50 L584.50 622.50 M581.18 625.68 L582.60 627.10 M578.00 627.00 L578.00 629.00 M574.82 625.68 L573.40 627.10 M573.50 622.50 L571.50 622.50 M574.82 619.32 L573.40 617.90 M578.00 618.00 L578.00 616.00 M581.18 619.32 L582.60 617.90" stroke="#666" stroke-width="1.5"/></svg>
<div class="a" style="left:0;top:647px;width:1189px;height:40px;background:radial-gradient(ellipse 420px 60px at 640px 20px,#0a2646 0%,rgba(8,30,56,0.6) 45%,rgba(6,20,38,0) 100%),linear-gradient(90deg,#050b17 0%,#06101f 25%,#081b33 50%,#08172e 75%,#0a1a31 100%)"></div>
<div class="a" style="left:131.3px;top:648.2px;width:45.6px;height:37.2px;background:#6b6f75;border:1px solid #9a9da2"></div>
<svg width="1219" height="687"><path d="M-2 655.5 L18 657 L17 671.5 L-2 673 Z" fill="#d0d6f4"/><path d="M-2 657.5 L15.5 659 L15 669.5 L-2 670.5 Z" fill="#3a46c8"/><path d="M-2 661 L11.5 661 L11.5 665.5 L-2 665.5 Z" fill="#5aa8ea"/><path d="M5 669.5 L15 659.5 L15 669.5 Z" fill="#8a94ee"/><ellipse cx="7.5" cy="674.8" rx="6" ry="2.6" fill="#d6d6d6"/><path d="M50 667.3 L63.8 667.3 A7.3 7.3 0 1 0 63 673.5" stroke="#1f80e2" stroke-width="4.3" fill="none"/><path d="M94 658 L100 658 L101.5 659.5 L115 659.5 L115 675 L94 675 Z" fill="#f5d36b"/><path d="M94 661 L115 661 L115 675 L94 675 Z" fill="#fbe38e"/><path d="M98.5 675 L98.5 668.5 L110.5 668.5 L110.5 675 L107.5 675 L107.5 671.5 L101.5 671.5 L101.5 675 Z" fill="#2f9be3"/><circle cx="153.7" cy="666.7" r="11" fill="#dd4437"/><path d="M153.7 666.7 L163.67 662.05 A11 11 0 0 1 151.79 677.53 Z" fill="#fbc02d"/><path d="M153.7 666.7 L151.79 677.53 A11 11 0 0 1 143.73 662.05 Z" fill="#1e9e50"/><circle cx="153.7" cy="666.7" r="5" fill="#fff"/><circle cx="153.7" cy="666.7" r="3.8" fill="#4a8af4"/><path d="M966 670 L969.7 665.5 L973.5 670 Z" fill="#fff"/><g fill="none" stroke="#fff" stroke-width="1"><rect x="989" y="660" width="6" height="4"/><path d="M988.5 664 L996 664 L996 674.5 L988.5 674.5 Z"/><path d="M996 673 L998 675 L1001.5 670" stroke="#aaa"/><path d="M1010 665 L1010 669 M1013 665 L1013 669 M1009 669 L1014 669 L1014 671 Q1011.5 673 1009 671 Z M1011.5 673 L1011.5 675"/><rect x="1016" y="663.5" width="9" height="9.5"/><rect x="1025" y="666.5" width="1.5" height="3.5" fill="#fff"/><path d="M1034.5 664.5 L1037.5 664.5 L1041 661 L1041 675 L1037.5 671.5 L1034.5 671.5 Z"/><path d="M1043.5 665.5 L1048.5 670.5 M1048.5 665.5 L1043.5 670.5"/><path d="M1061 674 A12 12 0 0 1 1073 662 M1064 674 A9 9 0 0 1 1073 665 M1067 674 A6 6 0 0 1 1073 668"/><path d="M1154 659.5 L1170 659.5 L1170 673 L1165 673 L1162 676 L1159 673 L1154 673 Z" stroke-width="1.2"/></g><circle cx="1072" cy="673" r="1.4" fill="#fff"/></svg>
<div class="t" style="top:651.84px;font-size:12.00px;color:#fff;left:1109.50px;transform:translateX(-50%)">9:40 PM</div>
<div class="t" style="top:669.84px;font-size:12.00px;color:#fff;left:1109.50px;transform:translateX(-50%)">7/15/2019</div>
</body></html>
